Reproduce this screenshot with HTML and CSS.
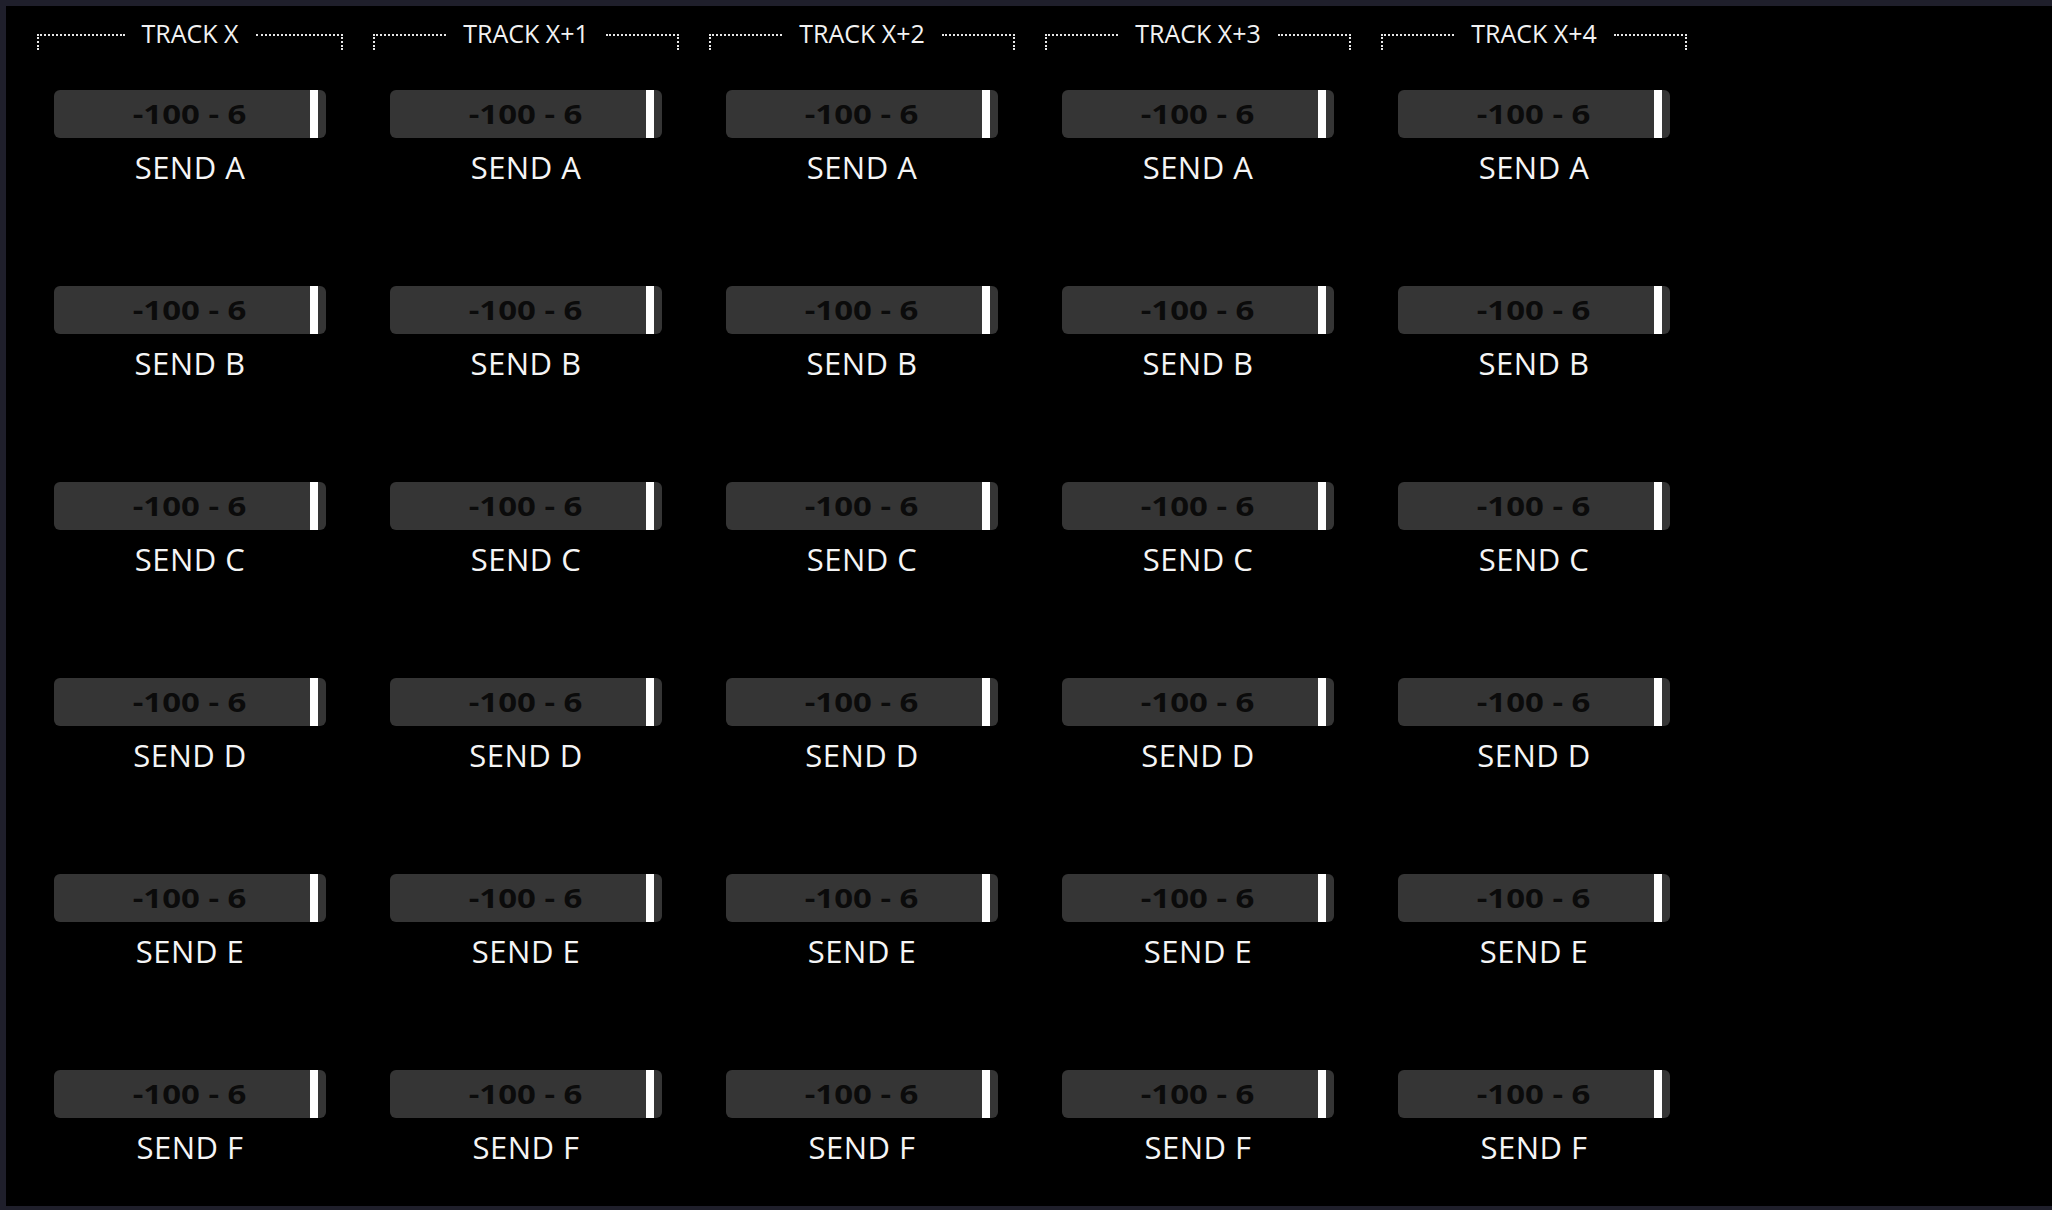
FILE: index.html
```html
<!DOCTYPE html>
<html>
<head>
<meta charset="utf-8">
<link rel="stylesheet" href="styles.css">
</head>
<body>
<div class="screen">
  <div class="tracks">
    <section class="track">
      <header class="track-head"><span class="seg seg-l"></span><span class="track-name">TRACK X</span><span class="seg seg-r"></span></header>
      <div class="send"><div class="slider"><span class="range">-100 - 6</span><span class="thumb"></span></div><div class="send-name">SEND A</div></div>
      <div class="send"><div class="slider"><span class="range">-100 - 6</span><span class="thumb"></span></div><div class="send-name">SEND B</div></div>
      <div class="send"><div class="slider"><span class="range">-100 - 6</span><span class="thumb"></span></div><div class="send-name">SEND C</div></div>
      <div class="send"><div class="slider"><span class="range">-100 - 6</span><span class="thumb"></span></div><div class="send-name">SEND D</div></div>
      <div class="send"><div class="slider"><span class="range">-100 - 6</span><span class="thumb"></span></div><div class="send-name">SEND E</div></div>
      <div class="send"><div class="slider"><span class="range">-100 - 6</span><span class="thumb"></span></div><div class="send-name">SEND F</div></div>
    </section>
    <section class="track">
      <header class="track-head"><span class="seg seg-l"></span><span class="track-name">TRACK X+1</span><span class="seg seg-r"></span></header>
      <div class="send"><div class="slider"><span class="range">-100 - 6</span><span class="thumb"></span></div><div class="send-name">SEND A</div></div>
      <div class="send"><div class="slider"><span class="range">-100 - 6</span><span class="thumb"></span></div><div class="send-name">SEND B</div></div>
      <div class="send"><div class="slider"><span class="range">-100 - 6</span><span class="thumb"></span></div><div class="send-name">SEND C</div></div>
      <div class="send"><div class="slider"><span class="range">-100 - 6</span><span class="thumb"></span></div><div class="send-name">SEND D</div></div>
      <div class="send"><div class="slider"><span class="range">-100 - 6</span><span class="thumb"></span></div><div class="send-name">SEND E</div></div>
      <div class="send"><div class="slider"><span class="range">-100 - 6</span><span class="thumb"></span></div><div class="send-name">SEND F</div></div>
    </section>
    <section class="track">
      <header class="track-head"><span class="seg seg-l"></span><span class="track-name">TRACK X+2</span><span class="seg seg-r"></span></header>
      <div class="send"><div class="slider"><span class="range">-100 - 6</span><span class="thumb"></span></div><div class="send-name">SEND A</div></div>
      <div class="send"><div class="slider"><span class="range">-100 - 6</span><span class="thumb"></span></div><div class="send-name">SEND B</div></div>
      <div class="send"><div class="slider"><span class="range">-100 - 6</span><span class="thumb"></span></div><div class="send-name">SEND C</div></div>
      <div class="send"><div class="slider"><span class="range">-100 - 6</span><span class="thumb"></span></div><div class="send-name">SEND D</div></div>
      <div class="send"><div class="slider"><span class="range">-100 - 6</span><span class="thumb"></span></div><div class="send-name">SEND E</div></div>
      <div class="send"><div class="slider"><span class="range">-100 - 6</span><span class="thumb"></span></div><div class="send-name">SEND F</div></div>
    </section>
    <section class="track">
      <header class="track-head"><span class="seg seg-l"></span><span class="track-name">TRACK X+3</span><span class="seg seg-r"></span></header>
      <div class="send"><div class="slider"><span class="range">-100 - 6</span><span class="thumb"></span></div><div class="send-name">SEND A</div></div>
      <div class="send"><div class="slider"><span class="range">-100 - 6</span><span class="thumb"></span></div><div class="send-name">SEND B</div></div>
      <div class="send"><div class="slider"><span class="range">-100 - 6</span><span class="thumb"></span></div><div class="send-name">SEND C</div></div>
      <div class="send"><div class="slider"><span class="range">-100 - 6</span><span class="thumb"></span></div><div class="send-name">SEND D</div></div>
      <div class="send"><div class="slider"><span class="range">-100 - 6</span><span class="thumb"></span></div><div class="send-name">SEND E</div></div>
      <div class="send"><div class="slider"><span class="range">-100 - 6</span><span class="thumb"></span></div><div class="send-name">SEND F</div></div>
    </section>
    <section class="track">
      <header class="track-head"><span class="seg seg-l"></span><span class="track-name">TRACK X+4</span><span class="seg seg-r"></span></header>
      <div class="send"><div class="slider"><span class="range">-100 - 6</span><span class="thumb"></span></div><div class="send-name">SEND A</div></div>
      <div class="send"><div class="slider"><span class="range">-100 - 6</span><span class="thumb"></span></div><div class="send-name">SEND B</div></div>
      <div class="send"><div class="slider"><span class="range">-100 - 6</span><span class="thumb"></span></div><div class="send-name">SEND C</div></div>
      <div class="send"><div class="slider"><span class="range">-100 - 6</span><span class="thumb"></span></div><div class="send-name">SEND D</div></div>
      <div class="send"><div class="slider"><span class="range">-100 - 6</span><span class="thumb"></span></div><div class="send-name">SEND E</div></div>
      <div class="send"><div class="slider"><span class="range">-100 - 6</span><span class="thumb"></span></div><div class="send-name">SEND F</div></div>
    </section>
  </div>
</div>
</body>
</html>
```
FILE: styles.css
```css
html, body {
  margin: 0;
  padding: 0;
  background: #1f1f2b;
}
body {
  font-family: "Open Sans", "Noto Sans", sans-serif;
}
.screen {
  box-sizing: border-box;
  width: 2052px;
  height: 1210px;
  border-top: 6px solid #1f1f2b;
  border-left: 6px solid #1f1f2b;
  border-bottom: 4px solid #1f1f2b;
  background: #000;
  padding: 10px 0 0 31px;
  overflow: hidden;
}
.tracks {
  display: flex;
  gap: 30px;
}
.track {
  width: 306px;
  display: flex;
  flex-direction: column;
}
.track-head {
  display: flex;
  align-items: flex-start;
  height: 34px;
  margin-bottom: 40px;
}
.seg {
  flex: 1;
  height: 14px;
  margin-top: 18px;
  border-top: 2px dotted #e6e6e6;
}
.seg-l { border-left: 2px dotted #e6e6e6; }
.seg-r { border-right: 2px dotted #e6e6e6; }
.track-name {
  color: #f2f2f2;
  font-size: 25px;
  line-height: 34px;
  margin: 0 17px;
  white-space: nowrap;
}
.send {
  height: 196px;
  display: flex;
  flex-direction: column;
  align-items: center;
}
.slider {
  position: relative;
  width: 272px;
  height: 48px;
  border-radius: 6px;
  background: #353535;
  display: flex;
  align-items: center;
  justify-content: center;
}
.range {
  color: #0b0b0b;
  font-weight: 700;
  font-size: 27px;
  line-height: 48px;
  display: inline-block;
  transform: scaleX(1.22);
}
.thumb {
  position: absolute;
  top: 0;
  right: 8px;
  width: 8px;
  height: 48px;
  background: #fff;
}
.send-name {
  margin-top: 9px;
  color: #f5f5f5;
  font-size: 31px;
  line-height: 40px;
  letter-spacing: 0.5px;
}
```
